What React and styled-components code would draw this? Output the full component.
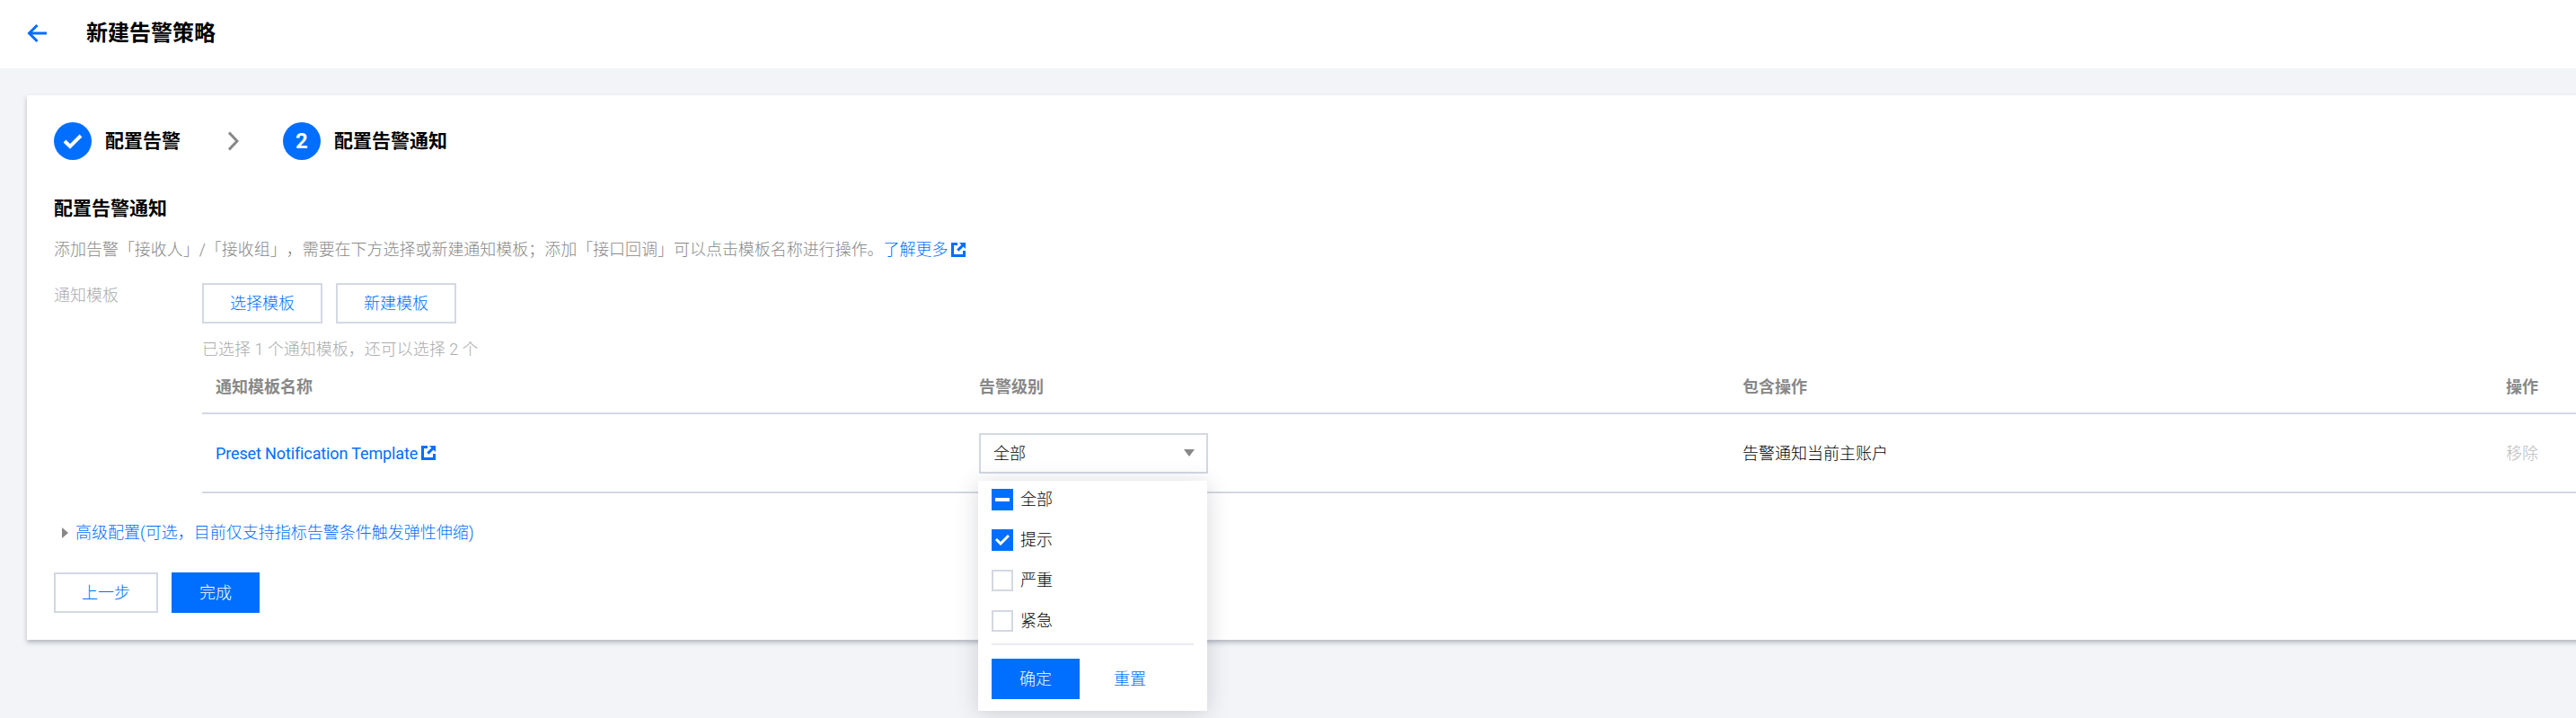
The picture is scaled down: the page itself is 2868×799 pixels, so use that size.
import React from 'react'
import styled, {createGlobalStyle} from 'styled-components'

const BLUE = '#006eff'
const LINE = '#d3d8e2'

const GlobalStyle = createGlobalStyle`
  html, body {
    margin: 0;
    padding: 0;
    overflow: hidden;
    background: #f3f4f7;
  }
  body {
    font-family: Roboto, "Noto Sans CJK SC", sans-serif;
    font-size: 18px;
    font-weight: 300;
    line-height: 27px;
    color: #000;
    text-spacing-trim: space-all;
  }
  * {
    box-sizing: border-box;
  }
`

const Page = styled.div`
  height: 799px;
  width: 2868px;
  overflow: hidden;
`

////////////////////////////// Top bar
const TopBar = styled.header`
  display: flex;
  align-items: center;
  height: 76px;
  padding-left: 30px;
  background: #fff;
`

const BackIcon = styled.svg`
  width: 22px;
  height: 22px;
  margin-right: 44px;
  margin-top: -2px;
  flex-shrink: 0;
`

const Title = styled.h1`
  margin: -2px 0 0;
  font-size: 24px;
  line-height: 36px;
  font-weight: 700;
  color: #000;
`

////////////////////////////// Card
const Card = styled.main`
  width: max-content;
  margin: 30px 0 0 30px;
  padding: 30px 0 30px 30px;
  background: #fff;
  box-shadow: 0 3px 5px rgba(54, 58, 80, 0.32);
`

const Steps = styled.div`
  display: flex;
  align-items: center;
  height: 42px;
`

const StepCircle = styled.span`
  display: flex;
  align-items: center;
  justify-content: center;
  width: 42px;
  height: 42px;
  border-radius: 50%;
  background: ${BLUE};
  color: #fff;
  font-size: 24px;
  font-weight: 700;
`

const StepLabel = styled.span`
  margin-left: 15px;
  font-size: 21px;
  font-weight: 700;
  line-height: 30px;
`

const StepArrow = styled.svg`
  width: 13px;
  height: 22px;
  margin: 0 49px 0 52px;
`

const SectionTitle = styled.h2`
  margin: 39px 0 0;
  font-size: 21px;
  line-height: 30px;
  font-weight: 700;
`

const Description = styled.p`
  display: flex;
  align-items: center;
  margin: 17px 0 0;
  color: #888;
  white-space: pre;
  letter-spacing: -0.03px;
`

const TextLink = styled.a`
  color: ${BLUE};
`

const TemplateLink = styled(TextLink)`
  font-weight: 400;
  letter-spacing: -0.13px;
`

const LinkIcon = styled.svg`
  width: 16px;
  height: 16px;
  margin-left: 4px;
  flex-shrink: 0;
`

const FormRow = styled.div`
  display: flex;
  margin-top: 24px;
`

const FieldLabel = styled.div`
  width: 165px;
  flex-shrink: 0;
  color: #aaa;
`

const ButtonRow = styled.div`
  display: flex;
  gap: 15px;
`

const Button = styled.button`
  height: 45px;
  width: ${p => p.$width}px;
  padding: 0;
  border: ${p => p.$primary ? 'none' : `2px solid ${LINE}`};
  border-radius: 0;
  background: ${p => p.$primary ? BLUE : '#fff'};
  color: ${p => p.$primary ? '#fff' : BLUE};
  font: inherit;
`

const Hint = styled.div`
  margin-top: 15px;
  color: #aaa;
`

////////////////////////////// Table
const TableRow = styled.div`
  display: grid;
  grid-template-columns: repeat(4, 850px);
  align-items: center;
  height: ${p => p.$height}px;
  border-bottom: 2px solid ${LINE};
`

const HeadCell = styled.div`
  padding-left: 15px;
  color: #888;
  font-weight: 700;
`

const Cell = styled.div`
  display: flex;
  align-items: center;
  position: relative;
  padding-left: 15px;
  color: ${p => p.$muted ? '#bbb' : '#000'};
`

const Select = styled.div`
  display: flex;
  align-items: center;
  justify-content: space-between;
  width: 255px;
  height: 45px;
  padding: 0 13px 0 14px;
  border: 2px solid ${LINE};
  background: #fff;
`

const Caret = styled.span`
  width: 0;
  height: 0;
  border-left: 6px solid transparent;
  border-right: 6px solid transparent;
  border-top: 8px solid #888;
`

////////////////////////////// Dropdown over the table
const Dropdown = styled.div`
  position: absolute;
  z-index: 2;
  left: 14px;
  top: 53px;
  width: 255px;
  height: 256px;
  padding: 9px 15px 15px;
  background: #fff;
  box-shadow: 0 3px 24px rgba(54, 58, 80, 0.2);
`

const OptionList = styled.div`
  display: flex;
  flex-direction: column;
  gap: 21px;
`

const Option = styled.label`
  display: flex;
  align-items: center;
  gap: 8px;
  height: 24px;
  color: #000;
`

const Checkbox = styled.span`
  display: flex;
  align-items: center;
  justify-content: center;
  width: 24px;
  height: 24px;
  border: ${p => p.$state ? 'none' : `2px solid ${LINE}`};
  background: ${p => p.$state ? BLUE : '#fff'};
`

const MinusBar = styled.span`
  width: 16px;
  height: 4px;
  background: #fff;
`

const Divider = styled.div`
  margin-top: 13px;
  height: 2px;
  background: #e8ebf0;
`

const DropdownActions = styled.div`
  display: flex;
  align-items: center;
  gap: 38px;
  margin-top: 15px;
`

const PlainAction = styled.span`
  color: ${BLUE};
`

////////////////////////////// Below the table
const Advanced = styled.div`
  display: flex;
  align-items: center;
  gap: 8px;
  margin: 30px 0 0 9px;
  color: ${BLUE};
`

const AdvancedCaret = styled.span`
  width: 0;
  height: 0;
  border-top: 6px solid transparent;
  border-bottom: 6px solid transparent;
  border-left: 7px solid #888;
`

const Footer = styled.div`
  display: flex;
  gap: 15px;
  margin-top: 31px;
`

const ExternalIcon = () => (
  <LinkIcon viewBox="0 0 16 16">
    <path d="M7 0H0v16h16V9h-3v4H3V3h4z" fill={BLUE} />
    <path d="M9 0h7v7l-2.4-2.4-5.2 5.2-2.2-2.2 5.2-5.2z" fill={BLUE} />
  </LinkIcon>
)

const options = [
  {label: '全部', state: 'some'},
  {label: '提示', state: 'on'},
  {label: '严重', state: null},
  {label: '紧急', state: null},
]

export default function App() {
  return (
    <Page>
      <GlobalStyle />
      <TopBar>
        <BackIcon viewBox="0 0 22 22" fill="none" stroke={BLUE} strokeWidth="3">
          <path d="M22 11H3" />
          <path d="M11.5 2L2.5 11l9 9" />
        </BackIcon>
        <Title>新建告警策略</Title>
      </TopBar>

      <Card>
        <Steps>
          <StepCircle>
            <svg width="22" height="18" viewBox="0 0 22 18" fill="none" stroke="#fff" strokeWidth="4">
              <path d="M2 9l6 6L20 3" />
            </svg>
          </StepCircle>
          <StepLabel>配置告警</StepLabel>
          <StepArrow viewBox="0 0 13 22" fill="none" stroke="#888" strokeWidth="3">
            <path d="M2 1.5L11 11l-9 9.5" />
          </StepArrow>
          <StepCircle>2</StepCircle>
          <StepLabel>配置告警通知</StepLabel>
        </Steps>

        <SectionTitle>配置告警通知</SectionTitle>
        <Description>
          添加告警「接收人」/「接收组」，需要在下方选择或新建通知模板；添加「接口回调」可以点击模板名称进行操作。
          <TextLink>了解更多</TextLink>
          <ExternalIcon />
        </Description>

        <FormRow>
          <FieldLabel>通知模板</FieldLabel>
          <div>
            <ButtonRow>
              <Button $width={134}>选择模板</Button>
              <Button $width={134}>新建模板</Button>
            </ButtonRow>
            <Hint>已选择 1 个通知模板，还可以选择 2 个</Hint>
            <TableRow $height={59}>
              <HeadCell>通知模板名称</HeadCell>
              <HeadCell>告警级别</HeadCell>
              <HeadCell>包含操作</HeadCell>
              <HeadCell>操作</HeadCell>
            </TableRow>
            <TableRow $height={88}>
              <Cell>
                <TemplateLink>Preset Notification Template</TemplateLink>
                <ExternalIcon />
              </Cell>
              <Cell>
                <Select>
                  全部
                  <Caret />
                </Select>
                <Dropdown>
                  <OptionList>
                    {options.map(o => (
                      <Option key={o.label}>
                        <Checkbox $state={o.state}>
                          {o.state === 'some' && <MinusBar />}
                          {o.state === 'on' && (
                            <svg width="16" height="13" viewBox="0 0 16 13" fill="none" stroke="#fff" strokeWidth="3">
                              <path d="M1 6l5 5L15 2" />
                            </svg>
                          )}
                        </Checkbox>
                        {o.label}
                      </Option>
                    ))}
                  </OptionList>
                  <Divider />
                  <DropdownActions>
                    <Button $primary $width={98}>确定</Button>
                    <PlainAction>重置</PlainAction>
                  </DropdownActions>
                </Dropdown>
              </Cell>
              <Cell>告警通知当前主账户</Cell>
              <Cell $muted>移除</Cell>
            </TableRow>
          </div>
        </FormRow>

        <Advanced>
          <AdvancedCaret />
          高级配置(可选，目前仅支持指标告警条件触发弹性伸缩)
        </Advanced>

        <Footer>
          <Button $width={116}>上一步</Button>
          <Button $primary $width={98}>完成</Button>
        </Footer>
      </Card>
    </Page>
  )
}
